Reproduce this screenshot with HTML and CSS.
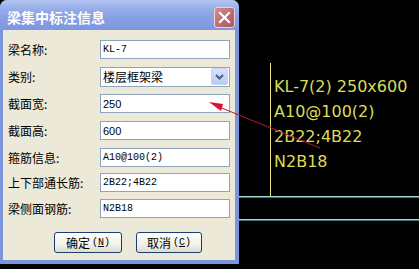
FILE: index.html
```html
<!DOCTYPE html>
<html>
<head>
<meta charset="utf-8">
<link rel="stylesheet" href="styles.css">
</head>
<body>
<div class="screen">
  <div class="dialog">
    <div class="titlebar">
      <span class="title">梁集中标注信息</span>
      <span class="close"><svg width="19" height="19" viewBox="0 0 19 19"><path d="M5 5 L14 14 M14 5 L5 14" stroke="#fff" stroke-width="2.2" stroke-linecap="square"/></svg></span>
    </div>
    <div class="body">
      <div class="form">
        <div class="row"><span class="label">梁名称:</span><span class="input mono">KL-7</span></div>
        <div class="row"><span class="label">类别:</span><span class="select"><span class="seltext">楼层框架梁</span><span class="drop"><svg width="9" height="6" viewBox="0 0 9 6"><path d="M1 1 L4.5 4.5 L8 1" fill="none" stroke="#4d6185" stroke-width="2"/></svg></span></span></div>
        <div class="row"><span class="label">截面宽:</span><span class="input sans">250</span></div>
        <div class="row"><span class="label">截面高:</span><span class="input sans">600</span></div>
        <div class="row"><span class="label">箍筋信息:</span><span class="input mono">A10@100(2)</span></div>
        <div class="row r6"><span class="label">上下部通长筋:</span><span class="input mono">2B22;4B22</span></div>
        <div class="row r7"><span class="label">梁侧面钢筋:</span><span class="input mono">N2B18</span></div>
      </div>
      <div class="buttons">
        <span class="btn ok">确定 <span class="key">(<u>N</u>)</span></span>
        <span class="btn cancel">取消 <span class="key">(<u>C</u>)</span></span>
      </div>
    </div>
  </div>
  <div class="canvas">
    <div class="vline"></div>
    <div class="annot">
      <div>KL-7(2) 250x600</div>
      <div>A10@100(2)</div>
      <div>2B22;4B22</div>
      <div>N2B18</div>
    </div>
    <div class="hline h1"></div>
    <div class="hline h2"></div>
  </div>
  <svg class="arrow" width="419" height="269" viewBox="0 0 419 269">
    <line x1="218" y1="106.5" x2="320" y2="148" stroke="#b81830" stroke-width="1"/>
    <polygon points="209,102 223,104 221,111" fill="#e0102a"/>
  </svg>
</div>
</body>
</html>
```

FILE: styles.css
```css
* { box-sizing: border-box; }
body {
  margin: 0;
  background: #000;
  width: 419px;
  height: 269px;
  overflow: hidden;
  font-family: "Noto Sans CJK SC", "DejaVu Sans", sans-serif;
}
.screen {
  position: relative;
  display: flex;
  height: 269px;
}
.dialog {
  flex: none;
  width: 239px;
  height: 264px;
  display: flex;
  flex-direction: column;
  background: #7c94dc;
  border-radius: 7px 7px 0 0;
}
.titlebar {
  height: 30px;
  flex: none;
  display: flex;
  align-items: center;
  justify-content: space-between;
  padding: 4px 4px 0 7px;
  background: linear-gradient(#b3c5f2, #93aae8 35%, #849de2 70%, #7d96de);
  border-radius: 7px 7px 0 0;
}
.title {
  color: #fff;
  font-weight: bold;
  font-size: 14px;
  line-height: 16px;
}
.close {
  width: 21px;
  height: 21px;
  border: 1px solid #e9d6dc;
  border-radius: 3px;
  background: linear-gradient(135deg, #d28e8a, #b9686e 60%, #ad5c66);
  display: flex;
  align-items: center;
  justify-content: center;
}
.close svg { display: block; }
.body {
  flex: 1;
  margin: 0 4px 4px 3px;
  background: #ece9d8;
  padding: 10px 0 0 5px;
  display: flex;
  flex-direction: column;
}
.form {
  display: flex;
  flex-direction: column;
  gap: 8px;
}
.row {
  display: flex;
  align-items: center;
  height: 19px;
}
.r6 { margin-top: -2px; }
.r7 { margin-top: -1px; }
.label {
  width: 92px;
  font-size: 12px;
  color: #000;
  line-height: 14px;
}
.input {
  width: 130px;
  height: 19px;
  background: #fff;
  border: 1px solid #8ea4bd;
  padding-left: 2px;
  display: flex;
  align-items: center;
  color: #000;
}
.mono {
  font-family: "Liberation Mono", monospace;
  font-size: 10px;
}
.sans {
  font-family: "Liberation Sans", sans-serif;
  font-size: 11px;
}
.select {
  width: 130px;
  height: 20px;
  background: #fff;
  border: 1px solid #8ea4bd;
  display: flex;
  align-items: center;
  justify-content: space-between;
  padding: 0 1px 0 2px;
}
.seltext {
  font-size: 12px;
  line-height: 14px;
}
.drop {
  width: 17px;
  height: 17px;
  border: 1px solid #c5d3f5;
  border-radius: 2px;
  background: linear-gradient(#d7e2fb, #b9cbf4);
  display: flex;
  align-items: center;
  justify-content: center;
}
.drop svg { display: block; }
.buttons {
  display: flex;
  gap: 14px;
  margin-top: 14px;
  padding-left: 46px;
}
.btn {
  height: 21px;
  border: 1px solid #1c3f6e;
  border-radius: 3px;
  background: linear-gradient(#fdfdfb, #f2f1ea 60%, #dedbd0);
  font-size: 12px;
  display: flex;
  align-items: center;
  justify-content: center;
  color: #000;
}
.ok { width: 68px; }
.cancel { width: 66px; }
.key {
  font-family: "Liberation Mono", monospace;
  font-size: 10px;
  margin-left: 2px;
}
.canvas {
  flex: 1;
  position: relative;
}
.vline {
  position: absolute;
  left: 31px;
  top: 63px;
  width: 1px;
  height: 134px;
  background: #ece47e;
}
.hline {
  position: absolute;
  left: 0;
  right: 0;
  height: 1px;
  background: #a2dada;
  box-shadow: 0 1px 0 #3f7577;
}
.h1 { top: 196px; }
.h2 { top: 219px; }
.annot {
  position: absolute;
  left: 35px;
  top: 74px;
  font-family: "DejaVu Sans", sans-serif;
  font-size: 16px;
  line-height: 25px;
  color: #dcdc5a;
}
.arrow {
  position: absolute;
  left: 0;
  top: 0;
  pointer-events: none;
}
```
